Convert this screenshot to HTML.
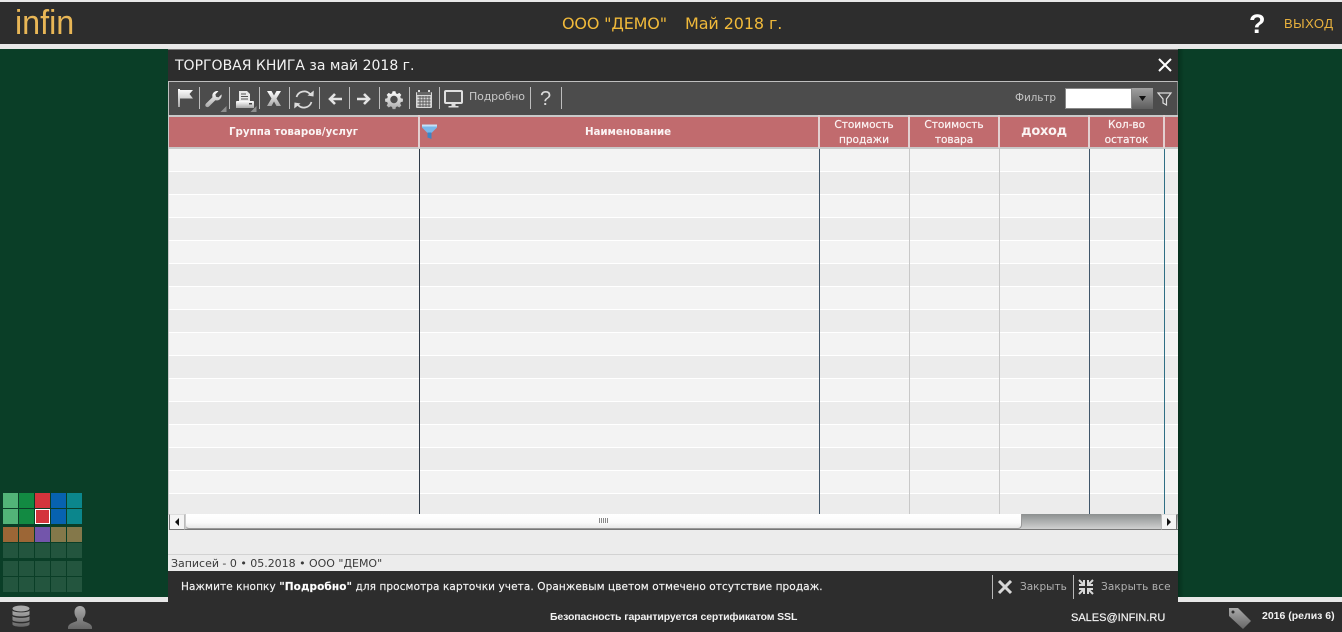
<!DOCTYPE html>
<html><head><meta charset="utf-8">
<style>
*{box-sizing:border-box}
html,body{margin:0;padding:0;width:1342px;height:632px;overflow:hidden;background:#e8e8e8;font-family:"DejaVu Sans","Liberation Sans",sans-serif}
.a{position:absolute}
.t{position:absolute;white-space:nowrap}
.h{position:absolute;color:#fbf3f3;font:bold 10.300px/15px "DejaVu Sans",sans-serif;text-align:center}
.n{font-weight:normal;font-size:10.600px;letter-spacing:-.05px;-webkit-text-stroke:.2px #fbf3f3}
.sep{position:absolute;top:87px;width:1px;height:22px;background:#bdbdbd}
</style></head><body>
<div class="a" style="left:0;top:2px;width:1342px;height:42px;background:#2d2d2d"></div>
<div class="t" style="left:15px;top:-2px;color:#e8b656;font:34px/50px 'Liberation Sans',sans-serif;transform:scaleX(.95);transform-origin:0 0">infin</div>
<div class="t" style="left:562px;top:13px;color:#f0b93a;font:16px/22px 'DejaVu Sans',sans-serif;letter-spacing:-.17px">ООО "ДЕМО"</div>
<div class="t" style="left:685px;top:13px;color:#f0b93a;font:16px/22px 'DejaVu Sans',sans-serif;letter-spacing:-.1px">Май 2018 г.</div>
<div class="t" style="left:1249px;top:8px;color:#fff;font:bold 27px/32px 'Liberation Sans',sans-serif">?</div>
<div class="t" style="left:1284px;top:15px;color:#e8b13e;font:13px/18px 'Liberation Sans',sans-serif;letter-spacing:.5px">ВЫХОД</div>

<div class="a" style="left:0;top:49px;width:1342px;height:548px;background:#0a3e27"></div>
<div class="a" style="left:1178px;top:49px;width:6px;height:548px;background:linear-gradient(90deg,#06301d,#0a3e27)"></div>

<!-- tile grid -->
<svg class="a" style="left:0;top:490px" width="90" height="105">
<g>
<rect x="3" y="3" width="15" height="15" fill="#52b478"/><rect x="19" y="3" width="15" height="15" fill="#128a42"/><rect x="35" y="3" width="15" height="15" fill="#d4343c"/><rect x="51" y="3" width="15" height="15" fill="#0762b0"/><rect x="67" y="3" width="15" height="15" fill="#0b868c"/>
<rect x="3" y="19" width="15" height="15" fill="#52b478"/><rect x="19" y="19" width="15" height="15" fill="#128a42"/><rect x="35" y="19" width="15" height="15" fill="#d4343c"/><rect x="35.500" y="19.500" width="14" height="14" fill="none" stroke="#fff"/><rect x="51" y="19" width="15" height="15" fill="#0762b0"/><rect x="67" y="19" width="15" height="15" fill="#0b868c"/>
<rect x="3" y="37" width="15" height="15" fill="#9c6636"/><rect x="19" y="37" width="15" height="15" fill="#9c6636"/><rect x="35" y="37" width="15" height="15" fill="#7355ab"/><rect x="51" y="37" width="15" height="15" fill="#84784a"/><rect x="67" y="37" width="15" height="15" fill="#84784a"/>
</g>
<g fill="#23553e">
<rect x="3" y="53" width="15" height="15"/><rect x="19" y="53" width="15" height="15"/><rect x="35" y="53" width="15" height="15"/><rect x="51" y="53" width="15" height="15"/><rect x="67" y="53" width="15" height="15"/>
<rect x="3" y="71" width="15" height="15"/><rect x="19" y="71" width="15" height="15"/><rect x="35" y="71" width="15" height="15"/><rect x="51" y="71" width="15" height="15"/><rect x="67" y="71" width="15" height="15"/>
<rect x="3" y="87" width="15" height="15"/><rect x="19" y="87" width="15" height="15"/><rect x="35" y="87" width="15" height="15"/><rect x="51" y="87" width="15" height="15"/><rect x="67" y="87" width="15" height="15"/>
</g>
</svg>

<!-- bottom bar -->
<div class="a" style="left:0;top:602px;width:1342px;height:30px;background:#2d2d2d"></div>
<svg class="a" style="left:10px;top:604px" width="22" height="26"><defs><linearGradient id="g1" x1="0" y1="0" x2="0" y2="1"><stop offset="0" stop-color="#aaa"/><stop offset="1" stop-color="#666"/></linearGradient></defs>
<ellipse cx="11" cy="4.500" rx="8.500" ry="3" fill="#aaa"/><path d="M2.500 6.500c1 2.500 16 2.500 17 0v4c-1 2.500-16 2.500-17 0zM2.500 12c1 2.500 16 2.500 17 0v4c-1 2.500-16 2.500-17 0zM2.500 17.500c1 2.500 16 2.500 17 0v3c-1 3-16 3-17 0z" fill="url(#g1)"/></svg>
<svg class="a" style="left:67px;top:606px" width="26" height="24"><path d="M13 0c3.500 0 5.500 2.500 5.500 6 0 3-1.300 5-2.500 6.500v2.500c3 1.500 8 2 9 6v2H1v-2c1-4 6-4.500 9-6v-2.500C8.800 11 7.500 9 7.500 6 7.500 2.500 9.500 0 13 0z" fill="url(#g1)"/></svg>
<div class="t" style="left:550px;top:610px;color:#f2f2f2;font:bold 10.500px/14px 'Liberation Sans',sans-serif;letter-spacing:-.12px">Безопасность гарантируется сертификатом SSL</div>
<div class="t" style="left:1071px;top:611px;color:#f2f2f2;font:11px/15px 'Liberation Sans',sans-serif;-webkit-text-stroke:.2px #f2f2f2">SALES@INFIN.RU</div>
<svg class="a" style="left:1228px;top:606px" width="24" height="24"><path d="M1 2h9l13 13-8 8L1 10z" fill="url(#g1)"/><circle cx="5" cy="6" r="1.500" fill="#2d2d2d"/></svg>
<div class="t" style="left:1262px;top:609px;color:#f2f2f2;font:bold 10.500px/14px 'Liberation Sans',sans-serif">2016 (релиз 6)</div>

<!-- window -->
<div class="a" style="left:168px;top:49px;width:1010px;height:553px;background:#ececec"></div>
<div class="a" style="left:168px;top:50px;width:1010px;height:31px;background:#2d2d2d"></div>
<div class="a" style="left:168px;top:49px;width:1010px;height:1px;background:#777"></div>
<div class="t" style="left:175px;top:57px;color:#f2f2f2;font:14px/18px 'DejaVu Sans',sans-serif">ТОРГОВАЯ КНИГА за май 2018 г.</div>
<svg class="a" style="left:1158px;top:58px" width="14" height="14"><path d="M1 1l12 12M13 1L1 13" stroke="#fff" stroke-width="2"/></svg>

<!-- toolbar -->
<div class="a" style="left:168px;top:81px;width:1010px;height:34px;background:#4c4c4c;border:1px solid #bfbfbf;border-bottom:0;border-right-color:#888"></div>
<div class="sep" style="left:199px"></div><div class="sep" style="left:229px"></div><div class="sep" style="left:259px"></div><div class="sep" style="left:289px"></div><div class="sep" style="left:319px"></div><div class="sep" style="left:349px"></div><div class="sep" style="left:379px"></div><div class="sep" style="left:409px"></div><div class="sep" style="left:439px"></div><div class="sep" style="left:530px"></div><div class="sep" style="left:561px"></div>
<svg class="a" style="left:170px;top:84px" width="400" height="30">
<defs><linearGradient id="g2" x1="0" y1="0" x2="0" y2="1"><stop offset="0" stop-color="#fff"/><stop offset="1" stop-color="#a8a8a8"/></linearGradient></defs>
<!-- flag -->
<path d="M8 5h2v18H8zM10 6h13l-3.500 4 3.500 4.500H10z" fill="url(#g2)"/>
<!-- wrench -->
<path d="M39 22.500c-1.500 1.200-3 .5-3.500-.5-.5-1 0-2 .8-2.800l6.200-6c-.6-2.500.3-4.500 2.300-5.600 1.200-.6 2.500-.7 3.600-.3l-3 3 .6 2.500 2.500.6 3-3c.4 2-.3 4-2 5.200-1.300.9-2.800 1-4.200.6z" fill="url(#g2)"/>
<path d="M50.500 28l6-6v6zM80.500 28l6-6v6z" fill="#8e8e8e"/>
<!-- printer -->
<path d="M69 7h8l3 3v7H69z" fill="#e8e8e8"/><path d="M71 10h5M71 12.500h7M71 15h7" stroke="#555"/><path d="M67 17h16c.7 0 1 .4 1 1v6H66v-6c0-.6.4-1 1-1z" fill="url(#g2)"/><rect x="79" y="19" width="3" height="1.500" fill="#444"/>
<!-- X -->
<path d="M97 7h4.500l2.500 4.500 2.500-4.500H111l-4.500 7.500 4.500 7.500h-4.500l-2.500-4.500-2.500 4.500H97l4.500-7.500z" fill="url(#g2)"/>
<!-- refresh -->
<path d="M126.500 13a8 8 0 0 1 13.500-3M141.500 18a8 8 0 0 1-13.500 3" fill="none" stroke="#dcdcdc" stroke-width="1.700"/><path d="M137.500 11.500l6 1 .3-6zM130.500 19.500l-6-1-.3 6z" fill="#dcdcdc"/>
<!-- back -->
<path d="M172 15h-12M165 10l-5 5 5 5" fill="none" stroke="#e4e4e4" stroke-width="2.600"/>
<!-- forward -->
<path d="M187 15h12M194 10l5 5-5 5" fill="none" stroke="#e4e4e4" stroke-width="2.600"/>
<!-- gear -->
<path d="M222 6h3.500l.6 2.600 1.800.7 2.300-1.400 2.500 2.500-1.400 2.300.7 1.800 2.600.6v3.500l-2.600.6-.7 1.800 1.400 2.300-2.500 2.500-2.300-1.400-1.800.7-.6 2.600H222l-.6-2.600-1.800-.7-2.300 1.400-2.500-2.500 1.400-2.300-.7-1.800-2.600-.6v-3.500l2.600-.6.7-1.800-1.400-2.300 2.500-2.500 2.300 1.400 1.800-.7zM223.700 11.500a4.500 4.500 0 1 0 .01 0z" fill="url(#g2)" fill-rule="evenodd" transform="translate(224 15.500) scale(.82) translate(-223.750 -16)"/>
<!-- calendar -->
<rect x="246" y="8" width="16" height="16" rx="1" fill="#d8d8d8"/><path d="M249 6v4M259 6v4" stroke="#ddd" stroke-width="2"/><rect x="247" y="8" width="14" height="3" fill="#666"/><path d="M247.500 13h13M247.500 16h13M247.500 19h13M247.500 22h13M250 12v11M253 12v11M256 12v11M259 12v11" stroke="#555" stroke-width=".9"/>
<!-- monitor -->
<rect x="275" y="7" width="17" height="12" rx="1" fill="#555" stroke="#e0e0e0" stroke-width="2"/><path d="M281.500 20h4v2h3v1.500h-10V22h3z" fill="#ddd"/>
</svg>
<div class="t" style="left:469px;top:90px;color:#c8c8c8;font:11px/14px 'DejaVu Sans',sans-serif;letter-spacing:-.15px">Подробно</div>
<div class="t" style="left:540px;top:88px;color:#d8d8d8;font:20px/22px 'Liberation Sans',sans-serif">?</div>
<div class="t" style="left:1015px;top:92px;color:#c4c4c4;font:10.500px/13px 'DejaVu Sans',sans-serif;letter-spacing:-.1px">Фильтр</div>
<div class="a" style="left:1065px;top:88px;width:67px;height:21px;background:#fff;border:1px solid #888"></div>
<div class="a" style="left:1132px;top:88px;width:21px;height:21px;background:linear-gradient(#a0a0a0,#5e5e5e)"></div>
<svg class="a" style="left:1138px;top:95px" width="9" height="7"><path d="M1 1h7L4.500 6z" fill="#111"/></svg>
<svg class="a" style="left:1157px;top:92px" width="16" height="15"><path d="M1 1h13L9.500 7v6L6 11V7z" fill="none" stroke="#ddd" stroke-width="1.200"/></svg>

<!-- header -->
<div class="a" style="left:168px;top:115px;width:1010px;height:34px;background:#c9c9c9"></div>
<div class="a" style="left:169px;top:117px;width:1009px;height:30px;background:#c16b6e"></div>
<div class="a" style="left:418px;top:115px;width:2px;height:33px;background:#e3cfd0"></div>
<div class="a" style="left:818px;top:115px;width:2px;height:33px;background:#e3cfd0"></div>
<div class="a" style="left:908px;top:115px;width:2px;height:33px;background:#e3cfd0"></div>
<div class="a" style="left:998px;top:115px;width:2px;height:33px;background:#e3cfd0"></div>
<div class="a" style="left:1088px;top:115px;width:2px;height:33px;background:#e3cfd0"></div>
<div class="a" style="left:1163px;top:115px;width:2px;height:33px;background:#e3cfd0"></div>
<svg class="a" style="left:421px;top:123px" width="17" height="17"><path d="M1 2h15v2.500l-5.500 5.500H6.500L1 4.500z" fill="#7ab8ea"/><path d="M1 1.500h15v2H1z" fill="#c4e2f8"/><path d="M6.500 9.500h4v6.500l-4-1.500z" fill="#3f85c4"/></svg>
<div class="h" style="left:169px;top:125px;width:249px">Группа товаров/услуг</div>
<div class="h" style="left:429px;top:125px;width:398px;letter-spacing:-.1px">Наименование</div>
<div class="h n" style="left:820px;top:118px;width:88px">Стоимость<br>продажи</div>
<div class="h n" style="left:910px;top:118px;width:88px">Стоимость<br>товара</div>
<div class="h" style="left:1000px;top:124px;width:88px;font:bold 13px/15px 'DejaVu Sans',sans-serif;letter-spacing:-.3px">доход</div>
<div class="h n" style="left:1090px;top:118px;width:73px">Кол-во<br>остаток</div>

<!-- rows -->
<div class="a" style="left:169px;top:149px;width:1009px;height:365px;background:repeating-linear-gradient(180deg,#f3f3f3 0,#f3f3f3 22px,#fff 22px,#fff 23px,#ececec 23px,#ececec 45px,#fff 45px,#fff 46px)"></div>
<div class="a" style="left:419px;top:149px;width:1px;height:365px;background:#2e3a48"></div>
<div class="a" style="left:819px;top:149px;width:1px;height:365px;background:#40566a"></div>
<div class="a" style="left:909px;top:149px;width:1px;height:365px;background:#c8c8c8"></div>
<div class="a" style="left:999px;top:149px;width:1px;height:365px;background:#c8c8c8"></div>
<div class="a" style="left:1089px;top:149px;width:1px;height:365px;background:#40566a"></div>
<div class="a" style="left:1164px;top:149px;width:1px;height:365px;background:#2f6f85"></div>
<div class="a" style="left:168px;top:115px;width:1px;height:400px;background:#c9c9c9"></div>

<!-- scrollbar -->
<div class="a" style="left:169px;top:514px;width:1009px;height:16px;background:linear-gradient(#8c9090,#d4d4d4)"></div>
<div class="a" style="left:169px;top:529px;width:1009px;height:1px;background:#777"></div>
<div class="a" style="left:169px;top:514px;width:16px;height:16px;background:#f4f4f4;border:1px solid #777;border-top:1px solid #ddd;border-right:1px solid #bbb"></div>
<div class="a" style="left:1161px;top:514px;width:16px;height:16px;background:#f4f4f4;border:1px solid #777;border-top:1px solid #ddd;border-left:1px solid #bbb"></div>
<svg class="a" style="left:174px;top:518px" width="6" height="8"><path d="M5 0v8L1 4z" fill="#111"/></svg>
<svg class="a" style="left:1166px;top:518px" width="6" height="8"><path d="M1 0v8l4-4z" fill="#111"/></svg>
<div class="a" style="left:185px;top:514px;width:837px;height:15px;background:linear-gradient(#fff,#fbfbfb 60%,#e8e8e8);border:1px solid #999;border-top:0;border-left-color:#ccc;border-radius:0 0 4px 4px"></div>
<svg class="a" style="left:599px;top:518px" width="10" height="6"><path d="M.5 0v5M2.500 0v5M4.500 0v5M6.500 0v5M8.500 0v5" stroke="#888"/></svg>

<div class="a" style="left:168px;top:554px;width:1010px;height:1px;background:#d2d2d2"></div>
<div class="t" style="left:171px;top:557px;color:#3a3a3a;font:11px/14px 'DejaVu Sans',sans-serif;letter-spacing:-.02px">Записей - 0 • 05.2018 • ООО "ДЕМО"</div>

<!-- footer -->
<div class="a" style="left:168px;top:571px;width:1010px;height:31px;background:#2d2d2d"></div>
<div class="t" style="left:181px;top:580px;color:#f4f4f4;font:10.500px/14px 'DejaVu Sans',sans-serif;letter-spacing:.09px;-webkit-text-stroke:.15px #f4f4f4">Нажмите кнопку <b style="color:#fff">"Подробно"</b> для просмотра карточки учета. Оранжевым цветом отмечено отсутствие продаж.</div>
<div class="a" style="left:992px;top:575px;width:1px;height:24px;background:#b8b8b8"></div>
<div class="a" style="left:1073px;top:575px;width:1px;height:24px;background:#b8b8b8"></div>
<svg class="a" style="left:997px;top:580px" width="16" height="15"><path d="M2 1l12 12M14 1L2 13" stroke="#d8d8d8" stroke-width="3"/></svg>
<div class="t" style="left:1020px;top:580px;color:#b0b0b0;font:10.500px/14px 'DejaVu Sans',sans-serif;letter-spacing:0">Закрыть</div>
<svg class="a" style="left:1078px;top:579px" width="16" height="16"><path d="M1 1l5 5M6 1v5H1M15 1l-5 5M10 1v5h5M1 15l5-5M6 15v-5H1M15 15l-5-5M10 15v-5h5" fill="none" stroke="#d8d8d8" stroke-width="2"/></svg>
<div class="t" style="left:1101px;top:580px;color:#b0b0b0;font:10.500px/14px 'DejaVu Sans',sans-serif;letter-spacing:.1px">Закрыть все</div>
</body></html>
